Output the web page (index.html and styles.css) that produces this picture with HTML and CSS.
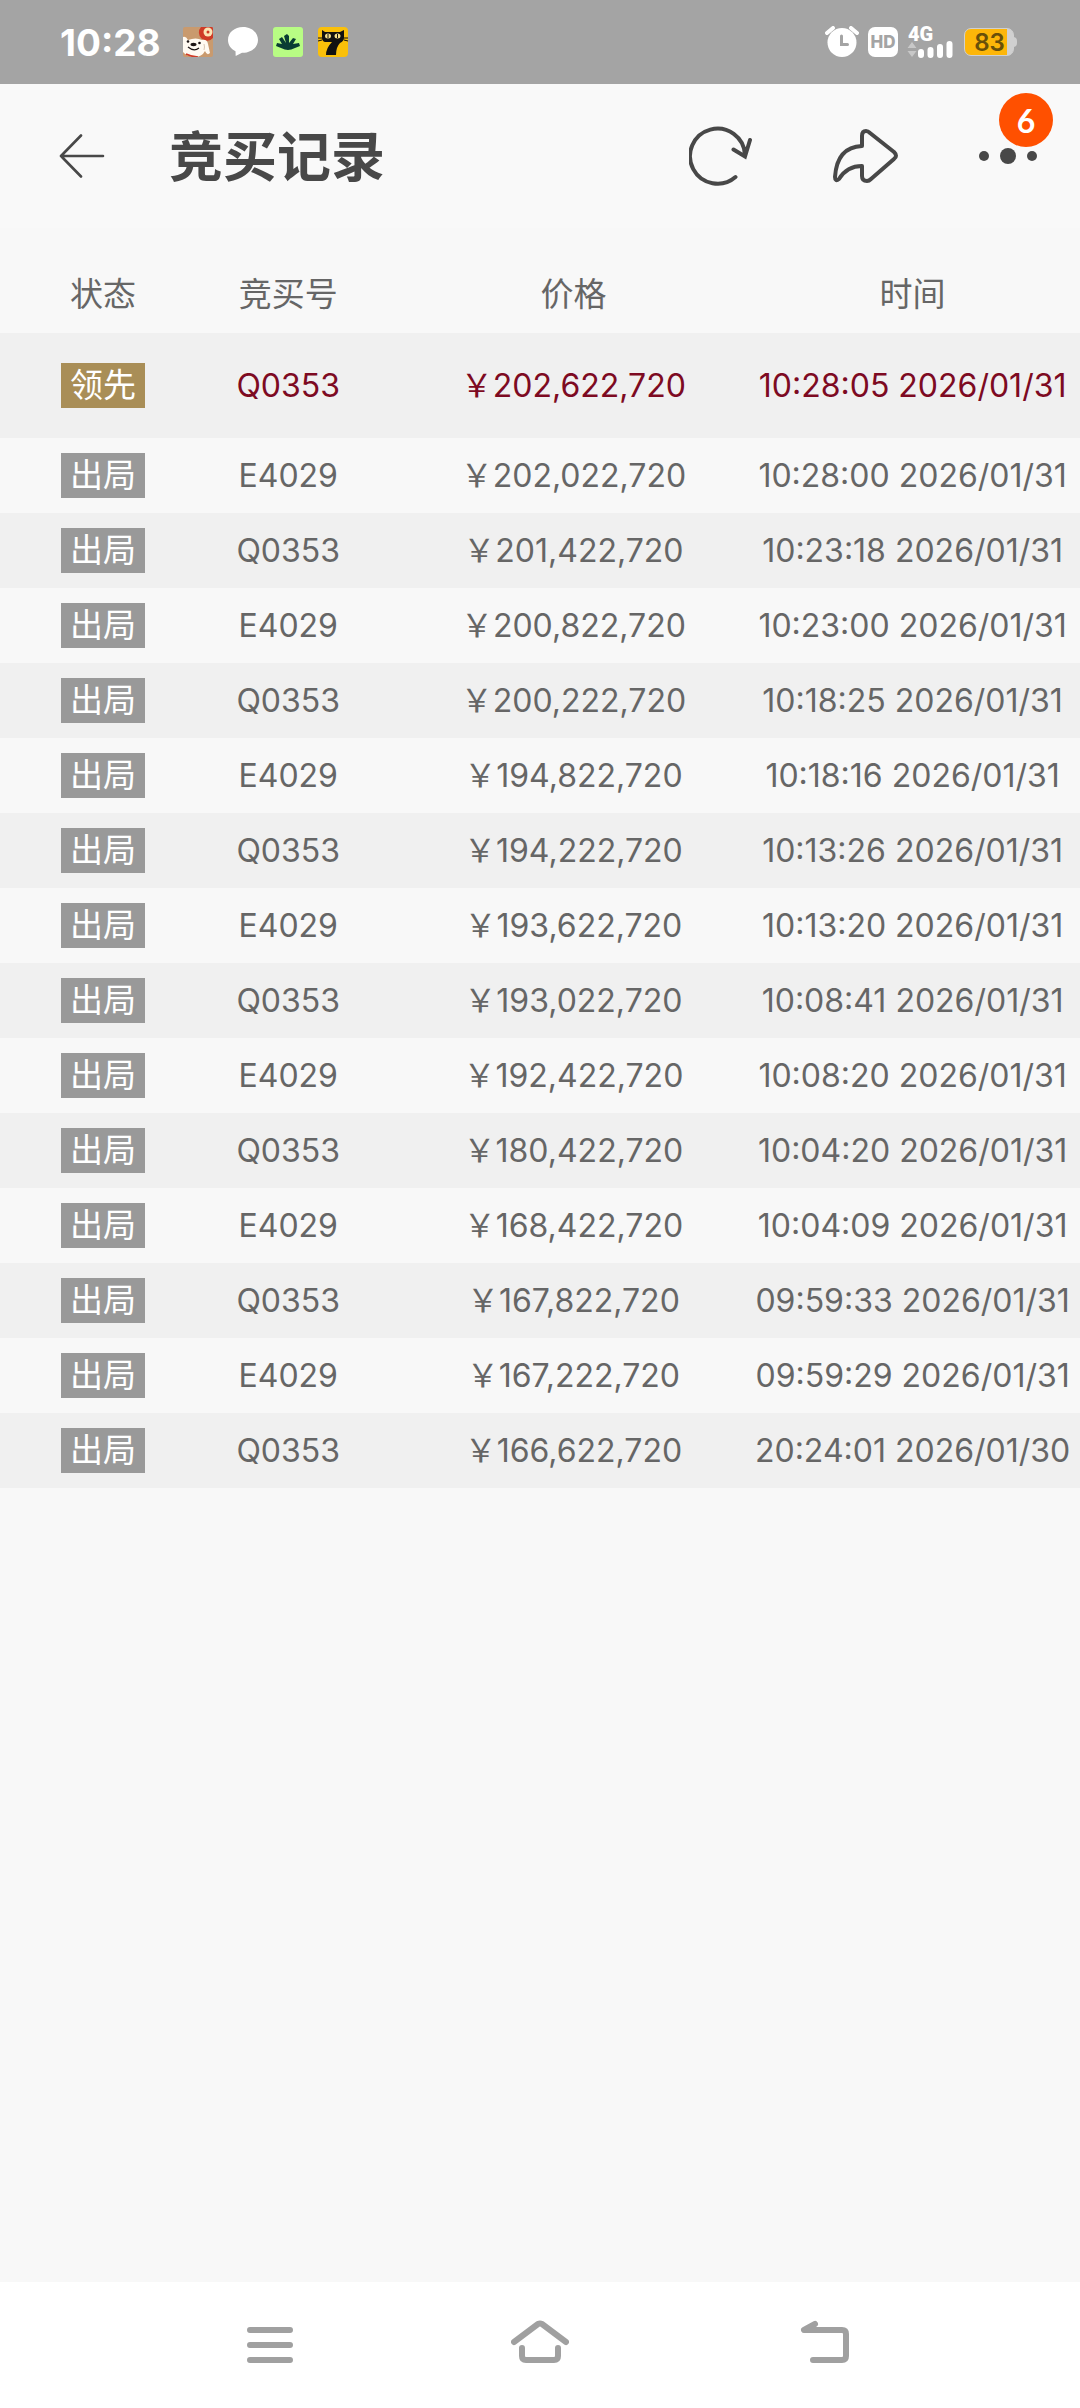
FILE: index.html
```html
<!DOCTYPE html>
<html lang="zh-CN">
<head>
<meta charset="utf-8">
<meta name="viewport" content="width=device-width">
<title>竞买记录</title>
<link rel="stylesheet" href="styles.css">
</head>
<body>
<div class="statusbar">
  <span class="clock">10:28</span>
  <div class="apps">
    <svg width="30" height="30" viewBox="0 0 30 30"><rect width="30" height="30" rx="2" fill="#c99a6e"/><path d="M18 0h11q1 0 1 2v9a7.500 7.500 0 0 1-12-11z" fill="#cf3a26"/><circle cx="25" cy="5" r="4.500" fill="#fbe3b4"/><circle cx="25" cy="5" r="1.500" fill="#cf3a26"/><path d="M0 10q3-1 5 3 8-3 14 0 5-1 6 4l2 9q-3 3-5-2-3 6-11 6-8-1-11-5z" fill="#fffaf2"/><path d="M21 17q1 3 0 6" stroke="#d8c5b2" fill="none"/><ellipse cx="10.500" cy="17.500" rx="3" ry="1.700" fill="#1c1414"/><circle cx="5" cy="14.500" r="1.300" fill="#1c1414"/><circle cx="16.500" cy="16" r="1.300" fill="#1c1414"/><path d="M5 20q6 5 11 1" fill="none" stroke="#1c1414" stroke-width="1.200"/><path d="M3 27q6 3 12 3" fill="none" stroke="#cf3a26" stroke-width="1.500"/></svg>
    <svg width="30" height="30" viewBox="0 0 30 30"><path d="M15 0C6.500 0 0 5.500 0 13c0 5 3 9 7.500 11.200L7.700 29 14 25.800C23 26 30 20.500 30 13S23.500 0 15 0z" fill="#fff"/></svg>
    <svg width="30" height="30" viewBox="0 0 30 30"><rect width="30" height="30" rx="3" fill="#b8fc84"/><path d="M13 16 11 9l3-2 2 2v7l4-5 3 1-3 5 6-1 1 3-5 2q-4 2-7 2t-7-2l-5-2 1-3 5 1-3-5 3-2z" fill="#083c33"/></svg>
    <svg width="30" height="30" viewBox="0 0 30 30"><rect width="30" height="30" rx="4" fill="#fac00a"/><path d="M4 3l3 2h15l4-2v8q0 3-4 5-4 4-4 12H8q0-7 6-13H7q-3-1-3-4z" fill="#111"/><ellipse cx="10" cy="9" rx="3" ry="2.500" fill="#f5e08a"/><ellipse cx="19.500" cy="9" rx="3" ry="2.500" fill="#f5e08a"/><path d="M10 7v4M19.500 7v4M0 11h4M0 14l4-1M30 11h-4M30 14l-4-1" stroke="#111"/></svg>
  </div>
  <div class="system">
    <svg width="34" height="32" viewBox="0 0 34 32"><path d="M2 7 8 2M26 2l6 5" stroke="#fff" stroke-width="4" stroke-linecap="round"/><circle cx="17" cy="16.500" r="14.500" fill="#fff"/><path d="M16.500 10v8.500h6" fill="none" stroke="#a4a4a4" stroke-width="3" stroke-linecap="round"/></svg>
    <span class="hd">HD</span>
    <div class="signal"><span class="network">4G</span>
      <svg width="46" height="18" viewBox="0 0 46 18"><path d="M5 2 9.500 8H.5zM5 17 .5 11h9z" fill="#c8c8c8"/><path d="M14 12v3M23.500 10v5M33 7v8M42.500 4v11" stroke="#fff" stroke-width="6" stroke-linecap="round"/></svg>
    </div>
    <div class="battery"><span class="charge">83</span></div>
  </div>
</div>
<header class="titlebar">
  <button class="icon-button" aria-label="返回"><svg width="46" height="44" viewBox="0 0 46 44"><path d="M22 1.500 2 22l20 20.500M2 22h42" fill="none" stroke="#484848" stroke-width="2.600" stroke-linecap="round" stroke-linejoin="round"/></svg></button>
  <h1 class="title">竞买记录</h1>
  <div class="actions">
    <button class="icon-button" aria-label="刷新"><svg width="64" height="60" viewBox="0 0 64 60"><path d="M46.500 51A27.500 27.500 0 1 1 56 29M44.500 23.500 56 30.500 61 14" fill="none" stroke="#484848" stroke-width="4" stroke-linecap="round"/></svg></button>
    <button class="icon-button" aria-label="分享"><svg width="66" height="56" viewBox="0 0 66 56"><path d="M29 18V8q0-5 4-5 2 0 4 2l24 19q4 4 0 7L38 51q-2 2-4 2-5 0-5-5V38Q14 38 6 51q-4 3-4-2Q4 19 29 18z" fill="none" stroke="#484848" stroke-width="4" stroke-linejoin="round"/></svg></button>
    <button class="icon-button more" aria-label="更多"><svg width="58" height="18" viewBox="0 0 58 18"><g fill="#484848"><circle cx="5" cy="9" r="5"/><circle cx="29" cy="9" r="8"/><circle cx="53" cy="9" r="5"/></g></svg><span class="badge">6</span></button>
  </div>
</header>
<main class="content">
  <table class="records">
    <thead><tr><th class="status">状态</th><th class="bidder">竞买号</th><th class="price">价格</th><th class="time">时间</th></tr></thead>
    <tbody>
      <tr class="leading"><td class="status"><span class="tag">领先</span></td><td class="bidder">Q0353</td><td class="price">￥202,622,720</td><td class="time">10:28:05 2026/01/31</td></tr>
      <tr><td class="status"><span class="tag">出局</span></td><td class="bidder">E4029</td><td class="price">￥202,022,720</td><td class="time">10:28:00 2026/01/31</td></tr>
      <tr><td class="status"><span class="tag">出局</span></td><td class="bidder">Q0353</td><td class="price">￥201,422,720</td><td class="time">10:23:18 2026/01/31</td></tr>
      <tr><td class="status"><span class="tag">出局</span></td><td class="bidder">E4029</td><td class="price">￥200,822,720</td><td class="time">10:23:00 2026/01/31</td></tr>
      <tr><td class="status"><span class="tag">出局</span></td><td class="bidder">Q0353</td><td class="price">￥200,222,720</td><td class="time">10:18:25 2026/01/31</td></tr>
      <tr><td class="status"><span class="tag">出局</span></td><td class="bidder">E4029</td><td class="price">￥194,822,720</td><td class="time">10:18:16 2026/01/31</td></tr>
      <tr><td class="status"><span class="tag">出局</span></td><td class="bidder">Q0353</td><td class="price">￥194,222,720</td><td class="time">10:13:26 2026/01/31</td></tr>
      <tr><td class="status"><span class="tag">出局</span></td><td class="bidder">E4029</td><td class="price">￥193,622,720</td><td class="time">10:13:20 2026/01/31</td></tr>
      <tr><td class="status"><span class="tag">出局</span></td><td class="bidder">Q0353</td><td class="price">￥193,022,720</td><td class="time">10:08:41 2026/01/31</td></tr>
      <tr><td class="status"><span class="tag">出局</span></td><td class="bidder">E4029</td><td class="price">￥192,422,720</td><td class="time">10:08:20 2026/01/31</td></tr>
      <tr><td class="status"><span class="tag">出局</span></td><td class="bidder">Q0353</td><td class="price">￥180,422,720</td><td class="time">10:04:20 2026/01/31</td></tr>
      <tr><td class="status"><span class="tag">出局</span></td><td class="bidder">E4029</td><td class="price">￥168,422,720</td><td class="time">10:04:09 2026/01/31</td></tr>
      <tr><td class="status"><span class="tag">出局</span></td><td class="bidder">Q0353</td><td class="price">￥167,822,720</td><td class="time">09:59:33 2026/01/31</td></tr>
      <tr><td class="status"><span class="tag">出局</span></td><td class="bidder">E4029</td><td class="price">￥167,222,720</td><td class="time">09:59:29 2026/01/31</td></tr>
      <tr><td class="status"><span class="tag">出局</span></td><td class="bidder">Q0353</td><td class="price">￥166,622,720</td><td class="time">20:24:01 2026/01/30</td></tr>
    </tbody>
  </table>
</main>
<nav class="navbar">
  <button class="icon-button" aria-label="最近任务"><svg width="46" height="50" viewBox="0 0 46 50"><path d="M3 10h40M3 25h40M3 40h40" stroke="#a0a0a0" stroke-width="6" stroke-linecap="round"/></svg></button>
  <button class="icon-button" aria-label="主页"><svg width="58" height="50" viewBox="0 0 58 50"><path d="M3 22 27 4q2-1 4 0l24 18M11 28v8q0 4 4 4h28q4 0 4-4v-8" fill="none" stroke="#a0a0a0" stroke-width="6" stroke-linecap="round" stroke-linejoin="round"/></svg></button>
  <button class="icon-button back" aria-label="后退"><svg width="50" height="50" viewBox="0 0 50 50"><path d="M15 4 4 10h38q4 0 4 4v22q0 4-4 4H13" fill="none" stroke="#a0a0a0" stroke-width="6" stroke-linecap="round" stroke-linejoin="round"/></svg></button>
</nav>
</body>
</html>
```
FILE: styles.css
```css
* { box-sizing: border-box; }

body {
  margin: 0;
  min-height: 100vh;
  display: flex;
  flex-direction: column;
  background: #f8f8f8;
  color: #666;
  font-family: Inter, "Noto Sans CJK SC", sans-serif;
  font-size: 32px;
}

svg { display: block; }

.statusbar {
  display: flex;
  align-items: center;
  height: 84px;
  padding: 0 63px 0 60px;
  background: #a4a4a4;
  color: #fff;
}

.clock {
  width: 123px;
  font-size: 37px;
  font-weight: 700;
}

.apps { display: flex; gap: 15px; }

.system {
  display: flex;
  align-items: center;
  gap: 9px;
  margin-left: auto;
}

.hd {
  width: 30px;
  height: 30px;
  border-radius: 7px;
  background: #fff;
  color: #a4a4a4;
  font-size: 17px;
  font-weight: 800;
  line-height: 30px;
  text-align: center;
}

.signal { width: 46px; height: 30px; margin-right: 2px; }

.network {
  display: block;
  height: 13px;
  padding-left: 1px;
  font-family: Roboto, sans-serif;
  font-size: 20px;
  font-weight: 900;
  line-height: 14px;
}

.battery {
  position: relative;
  width: 50px;
  height: 28px;
  margin-right: 3px;
  padding-left: 1px;
  border: 1px solid #d0d0d0;
  border-radius: 7px;
  background: linear-gradient(to right, #fdb609 42px, #d0d0d0 42px);
  color: #69500a;
  font-size: 24px;
  font-weight: 600;
  line-height: 27px;
  text-align: center;
}

.battery::after {
  content: "";
  position: absolute;
  top: 8px;
  right: -4px;
  width: 4px;
  height: 10px;
  border-radius: 0 4px 4px 0;
  background: #d0d0d0;
}

.icon-button {
  padding: 0;
  border: 0;
  background: none;
  font-family: inherit;
}

.titlebar {
  display: flex;
  align-items: center;
  height: 144px;
  padding: 0 43px 0 59px;
  background: #f9f9f9;
}

.title {
  margin: 0;
  padding: 4px 0 0 64px;
  color: #484848;
  font-size: 54px;
  font-weight: 700;
  line-height: 72px;
}

.actions {
  display: flex;
  align-items: center;
  gap: 80px;
  margin-left: auto;
}

.more { position: relative; }

.badge {
  position: absolute;
  right: -16px;
  bottom: 18px;
  width: 54px;
  height: 54px;
  border-radius: 50%;
  background: #ff5000;
  color: #fff;
  font-family: Lato, sans-serif;
  font-size: 32px;
  font-weight: 700;
  line-height: 56px;
  text-align: center;
}

.content { flex: 1; }

.records {
  width: 100%;
  border-collapse: collapse;
  table-layout: fixed;
  line-height: 45px;
  text-align: center;
  white-space: nowrap;
}

.records th {
  height: 105px;
  padding: 27px 0 0;
  font-size: 33px;
  font-weight: 400;
}

.records td { height: 75px; padding: 0; }
.records .leading td { height: 105px; }
.records tbody tr:nth-child(odd) { background: #f0f0f0; }

.records .status { width: 16%; padding-left: 33px; }
.records .bidder { width: 21%; padding-left: 4px; }
.records .price { width: 32%; padding-left: 2px; }
.records .time { width: 31%; }

.tag {
  display: block;
  width: 84px;
  height: 45px;
  margin: 0 auto;
  background: #999;
  color: #fff;
  font-size: 33px;
}

.leading { color: #7d0a22; }
.leading .tag { background: #a98e57; }

.navbar {
  display: grid;
  grid-template-columns: repeat(3, 25%);
  justify-content: center;
  justify-items: center;
  align-items: center;
  height: 126px;
  background: #fff;
}

.back { padding-left: 30px; }
```
